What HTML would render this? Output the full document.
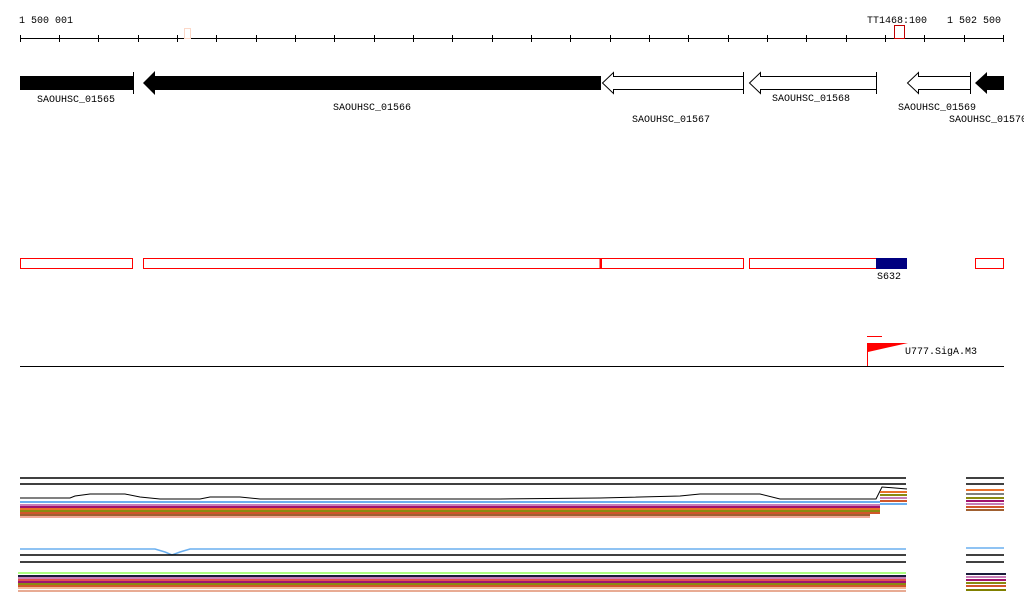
<!DOCTYPE html>
<html><head><meta charset="utf-8"><style>
html,body{margin:0;padding:0;background:#fff;width:1024px;height:611px;overflow:hidden}
svg{display:block}
text{font-family:"Liberation Mono","DejaVu Sans Mono",monospace;font-size:10px;fill:#000}
</style></head><body>
<svg width="1024" height="611" viewBox="0 0 1024 611" xmlns="http://www.w3.org/2000/svg">
<!-- ruler -->
<text x="19" y="23">1 500 001</text>
<text x="867" y="23">TT1468:100</text>
<text x="947" y="23">1 502 500</text>
<line x1="20" y1="38.5" x2="1004" y2="38.5" stroke="#000"/>
<g stroke="#000">
<line x1="20.5" y1="35" x2="20.5" y2="42"/><line x1="59.5" y1="35" x2="59.5" y2="42"/><line x1="98.5" y1="35" x2="98.5" y2="42"/><line x1="138.5" y1="35" x2="138.5" y2="42"/><line x1="177.5" y1="35" x2="177.5" y2="42"/><line x1="216.5" y1="35" x2="216.5" y2="42"/><line x1="256.5" y1="35" x2="256.5" y2="42"/><line x1="295.5" y1="35" x2="295.5" y2="42"/><line x1="334.5" y1="35" x2="334.5" y2="42"/><line x1="374.5" y1="35" x2="374.5" y2="42"/><line x1="413.5" y1="35" x2="413.5" y2="42"/><line x1="452.5" y1="35" x2="452.5" y2="42"/><line x1="492.5" y1="35" x2="492.5" y2="42"/><line x1="531.5" y1="35" x2="531.5" y2="42"/><line x1="570.5" y1="35" x2="570.5" y2="42"/><line x1="610.5" y1="35" x2="610.5" y2="42"/><line x1="649.5" y1="35" x2="649.5" y2="42"/><line x1="688.5" y1="35" x2="688.5" y2="42"/><line x1="728.5" y1="35" x2="728.5" y2="42"/><line x1="767.5" y1="35" x2="767.5" y2="42"/><line x1="806.5" y1="35" x2="806.5" y2="42"/><line x1="846.5" y1="35" x2="846.5" y2="42"/><line x1="885.5" y1="35" x2="885.5" y2="42"/><line x1="924.5" y1="35" x2="924.5" y2="42"/><line x1="964.5" y1="35" x2="964.5" y2="42"/><line x1="1003.5" y1="35" x2="1003.5" y2="42"/>
</g>
<rect x="184.5" y="28.5" width="6" height="10" fill="none" stroke="#fcd8c8"/>
<rect x="894.5" y="25.5" width="10" height="13" fill="none" stroke="#c00000"/>
<!-- genes -->
<rect x="20" y="76" width="113" height="14" fill="#000"/>
<line x1="133.5" y1="72" x2="133.5" y2="94" stroke="#000"/>
<text x="37" y="102">SAOUHSC_01565</text>
<polygon points="143,83 155,71 155,76 601,76 601,90 155,90 155,95" fill="#000"/>
<text x="333" y="110">SAOUHSC_01566</text>
<polygon points="602.5,83 613.5,72.5 613.5,76.5 743.5,76.5 743.5,89.5 613.5,89.5 613.5,93.5" fill="#fff" stroke="#000"/>
<line x1="743.5" y1="72" x2="743.5" y2="94" stroke="#000"/>
<text x="632" y="122">SAOUHSC_01567</text>
<polygon points="749.5,83 760.5,72.5 760.5,76.5 876.5,76.5 876.5,89.5 760.5,89.5 760.5,93.5" fill="#fff" stroke="#000"/>
<line x1="876.5" y1="72" x2="876.5" y2="94" stroke="#000"/>
<text x="772" y="101">SAOUHSC_01568</text>
<polygon points="907.5,83 918.5,72.5 918.5,76.5 970.5,76.5 970.5,89.5 918.5,89.5 918.5,93.5" fill="#fff" stroke="#000"/>
<line x1="970.5" y1="72" x2="970.5" y2="94" stroke="#000"/>
<text x="898" y="110">SAOUHSC_01569</text>
<polygon points="975,83 987,72 987,76 1004,76 1004,90 987,90 987,94" fill="#000"/>
<text x="949" y="122">SAOUHSC_01570</text>
<!-- red boxes -->
<g fill="none" stroke="#ff0000">
<rect x="20.5" y="258.5" width="112" height="10"/>
<rect x="143.5" y="258.5" width="457" height="10"/>
<rect x="601.5" y="258.5" width="142" height="10"/>
<rect x="749.5" y="258.5" width="127" height="10"/>
<rect x="975.5" y="258.5" width="28" height="10"/>
</g>
<line x1="600.5" y1="258" x2="600.5" y2="269" stroke="#ff0000" stroke-width="2"/>
<rect x="876" y="258" width="31" height="11" fill="#000080"/>
<text x="877" y="279">S632</text>
<!-- promoter -->
<line x1="867" y1="336.5" x2="882" y2="336.5" stroke="#ff0000"/>
<line x1="867.5" y1="343" x2="867.5" y2="367" stroke="#ff0000"/>
<polygon points="868,343 908,343 868,352" fill="#ff0000"/>
<text x="905" y="354">U777.SigA.M3</text>
<line x1="20" y1="366.5" x2="1004" y2="366.5" stroke="#000"/>
<!-- plot panel 1 -->
<g stroke-width="2">
<line x1="20" y1="478" x2="906" y2="478" stroke="#000" stroke-width="1.5"/>
<line x1="20" y1="484" x2="906" y2="484" stroke="#000" stroke-width="1.5"/>
<line x1="966" y1="478" x2="1004" y2="478" stroke="#000" stroke-width="1.5"/>
<line x1="966" y1="484" x2="1004" y2="484" stroke="#000" stroke-width="1.5"/>
<polyline points="20,498 70,498 75,496 90,494 125,494 140,497 160,499 200,499 210,497 240,497 260,499 500,499 600,498 680,496 700,494 760,494 780,499 876,499 882,487 907,489" fill="none" stroke="#000" stroke-width="1"/>
<line x1="20" y1="502" x2="880" y2="502" stroke="#6aafef"/>
<line x1="20" y1="505" x2="880" y2="505" stroke="#c77fb8"/>
<line x1="20" y1="507" x2="880" y2="507" stroke="#a0136e"/>
<line x1="20" y1="509" x2="880" y2="509" stroke="#e8702a"/>
<line x1="20" y1="511" x2="880" y2="511" stroke="#8a8a10"/>
<line x1="20" y1="513" x2="880" y2="513" stroke="#d0572a"/>
<line x1="20" y1="515" x2="870" y2="515" stroke="#a06030"/>
<line x1="20" y1="517" x2="870" y2="517" stroke="#e05030" stroke-width="1"/>
<line x1="880" y1="492" x2="907" y2="492" stroke="#e8702a"/>
<line x1="880" y1="495" x2="907" y2="495" stroke="#8a8a10"/>
<line x1="880" y1="498" x2="907" y2="498" stroke="#c77fb8"/>
<line x1="880" y1="501" x2="907" y2="501" stroke="#d0572a"/>
<line x1="880" y1="504" x2="907" y2="504" stroke="#6aafef"/>
<line x1="966" y1="490" x2="1004" y2="490" stroke="#e8702a"/>
<line x1="966" y1="494" x2="1004" y2="494" stroke="#000" stroke-width="1"/>
<line x1="966" y1="498" x2="1004" y2="498" stroke="#8a8a10"/>
<line x1="966" y1="501" x2="1004" y2="501" stroke="#a0136e"/>
<line x1="966" y1="504" x2="1004" y2="504" stroke="#c77fb8"/>
<line x1="966" y1="507" x2="1004" y2="507" stroke="#d0572a"/>
<line x1="966" y1="510" x2="1004" y2="510" stroke="#a06030"/>
<!-- plot panel 2 -->
<polyline points="20,549 155,549 165,552 172,555 180,552 190,549 906,549" fill="none" stroke="#6aafef" stroke-width="1.5"/>
<line x1="20" y1="555" x2="906" y2="555" stroke="#000" stroke-width="1.5"/>
<line x1="20" y1="562" x2="906" y2="562" stroke="#000" stroke-width="1.5"/>
<line x1="966" y1="548" x2="1004" y2="548" stroke="#6aafef" stroke-width="1.5"/>
<line x1="966" y1="555" x2="1004" y2="555" stroke="#000" stroke-width="1.5"/>
<line x1="966" y1="562" x2="1004" y2="562" stroke="#000" stroke-width="1.5"/>
<line x1="18" y1="573" x2="906" y2="573" stroke="#5aff00" stroke-width="1"/>
<line x1="18" y1="576" x2="906" y2="576" stroke="#1a1a3a"/>
<line x1="18" y1="578" x2="906" y2="578" stroke="#c77fb8"/>
<line x1="18" y1="580" x2="906" y2="580" stroke="#e05050"/>
<line x1="18" y1="582" x2="906" y2="582" stroke="#a0136e"/>
<line x1="18" y1="584" x2="906" y2="584" stroke="#8a8a10"/>
<line x1="18" y1="586" x2="906" y2="586" stroke="#d0572a"/>
<line x1="18" y1="588" x2="906" y2="588" stroke="#e8702a" stroke-width="1"/>
<line x1="18" y1="591" x2="906" y2="591" stroke="#d0572a" stroke-width="1"/>
<line x1="966" y1="574" x2="1006" y2="574" stroke="#1a1a3a"/>
<line x1="966" y1="577" x2="1006" y2="577" stroke="#c77fb8"/>
<line x1="966" y1="580" x2="1006" y2="580" stroke="#a0136e"/>
<line x1="966" y1="583" x2="1006" y2="583" stroke="#8a8a10"/>
<line x1="966" y1="586" x2="1006" y2="586" stroke="#d0572a"/>
<line x1="966" y1="590" x2="1006" y2="590" stroke="#808000"/>
</g>
</svg>
</body></html>
